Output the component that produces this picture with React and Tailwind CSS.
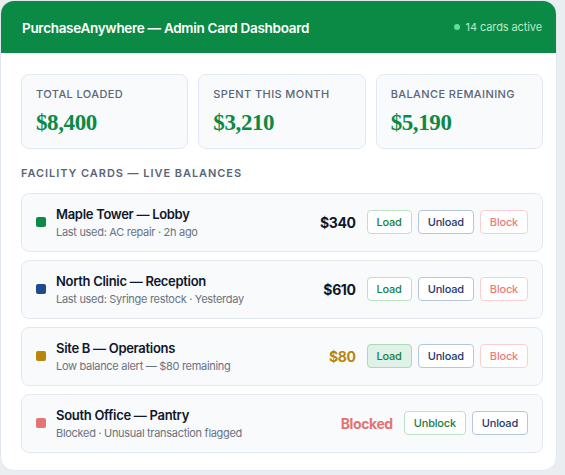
import React from "react";

const stats = [
  { label: "Total Loaded", value: "$8,400" },
  { label: "Spent This Month", value: "$3,210" },
  { label: "Balance Remaining", value: "$5,190" },
];

const cards = [
  {
    name: "Maple Tower — Lobby",
    sub: "Last used: AC repair · 2h ago",
    dot: "bg-[#0b8a45]",
    amount: "$340",
    amountCls: "text-[#0f172a]",
    actions: ["load", "unload", "block"],
  },
  {
    name: "North Clinic — Reception",
    sub: "Last used: Syringe restock · Yesterday",
    dot: "bg-[#1e4b8f]",
    amount: "$610",
    amountCls: "text-[#0f172a]",
    actions: ["load", "unload", "block"],
  },
  {
    name: "Site B — Operations",
    sub: "Low balance alert — $80 remaining",
    dot: "bg-[#b8860b]",
    amount: "$80",
    amountCls: "text-[#b8860b]",
    actions: ["loadActive", "unload", "block"],
  },
  {
    name: "South Office — Pantry",
    sub: "Blocked · Unusual transaction flagged",
    dot: "bg-[#e57373]",
    amount: "Blocked",
    amountCls: "text-[#e57373]",
    actions: ["unblock", "unload"],
  },
];

const buttonStyles = {
  load: { text: "Load", cls: "border-[#b9e2c7] text-[#16803f] bg-white" },
  loadActive: { text: "Load", cls: "border-[#a9d9b9] text-[#16803f] bg-[#e0f1e7]" },
  unload: { text: "Unload", cls: "border-[#b8c6dc] text-[#1e3a6e] bg-white" },
  block: { text: "Block", cls: "border-[#fbcfd0] text-[#ec7c7c] bg-white" },
  unblock: { text: "Unblock", cls: "border-[#b9e2c7] text-[#16803f] bg-white" },
};

const ActionButton = ({ kind }) => {
  const b = buttonStyles[kind];
  return (
    <button className={`h-[24px] px-[9px] rounded-[4px] border text-[11px] font-medium leading-none tracking-[-0.2px] ${b.cls}`}>
      {b.text}
    </button>
  );
};

export default function App() {
  return (
    <div
      className="w-[565px] h-[475px] bg-[#e9eef1] overflow-hidden"
      style={{ fontFamily: "Inter, 'Noto Sans', sans-serif" }}
    >
      <div className="w-[557px] h-[471px] bg-white rounded-[14px] overflow-hidden border border-[#e2e8f0]">
        {/* header */}
        <div className="h-[52px] bg-[#0b8a45] flex items-center justify-between pl-[21px] pr-[14px]">
          <h1 className="text-white text-[13.5px] font-semibold tracking-[-0.3px] mt-[2px]">
            PurchaseAnywhere — Admin Card Dashboard
          </h1>
          <div className="flex items-center gap-[6px] text-[11px] text-[#b9ebc8] tracking-[-0.1px]">
            <span className="w-[6px] h-[6px] rounded-full bg-[#5fe08f]"></span>
            14 cards active
          </div>
        </div>

        <div className="pl-[20px] pr-[13px] pt-[21px]">
          {/* stats */}
          <div className="grid grid-cols-3 gap-[10px]">
            {stats.map((s) => (
              <div key={s.label} className="h-[75px] rounded-[8px] bg-[#f8fafc] border border-[#e2e8f0] px-[14px] pt-[11px]">
                <p className="text-[11px] font-medium uppercase tracking-[0.4px] text-[#5b6577]">{s.label}</p>
                <p
                  className="mt-[8px] text-[23px] font-bold text-[#0b8a45] leading-none tracking-[-0.4px]"
                  style={{ fontFamily: "'Liberation Serif', 'DejaVu Serif', serif" }}
                >
                  {s.value}
                </p>
              </div>
            ))}
          </div>

          <h2 className="mt-[16px] text-[11px] font-semibold uppercase tracking-[0.95px] text-[#5b6577]">
            Facility Cards — Live Balances
          </h2>

          {/* card rows */}
          <div className="mt-[11px] flex flex-col gap-[8px]">
            {cards.map((c) => (
              <div key={c.name} className="h-[59px] rounded-[8px] bg-[#f8fafc] border border-[#e2e8f0] flex items-center pl-[14px] pr-[14px]">
                <span className={`w-[10px] h-[10px] rounded-[2px] ${c.dot}`}></span>
                <div className="ml-[10px] flex-1 tracking-[-0.3px]">
                  <p className="text-[13px] font-semibold text-[#0f172a] leading-[18px]">{c.name}</p>
                  <p className="text-[11px] text-[#6b7280] leading-[16px] mt-[1px]">{c.sub}</p>
                </div>
                <span className={`text-[14px] font-bold mr-[11px] tracking-[-0.4px] ${c.amountCls}`}>{c.amount}</span>
                <div className="flex gap-[6px]">
                  {c.actions.map((a) => (
                    <ActionButton key={a} kind={a} />
                  ))}
                </div>
              </div>
            ))}
          </div>
        </div>
      </div>
    </div>
  );
}
